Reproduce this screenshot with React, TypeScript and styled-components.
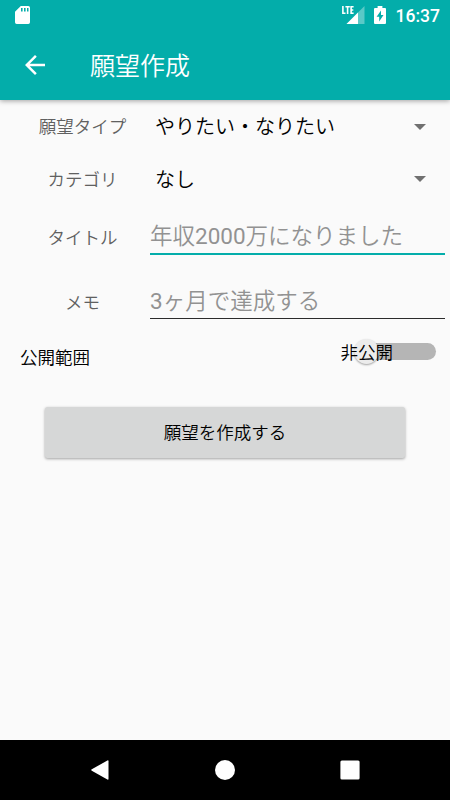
import React from 'react';
import styled, { createGlobalStyle } from 'styled-components';

const GlobalStyle = createGlobalStyle`
  *, *::before, *::after { box-sizing: border-box; }
  body { margin: 0; background: #fafafa; }
  svg { display: block; flex: none; }
  button { font: inherit; }
`;

const Screen = styled.div`
  width: 450px;
  height: 800px;
  display: flex;
  flex-direction: column;
  background: #fafafa;
  color: #000;
  font-family: Roboto, 'Noto Sans CJK JP', sans-serif;
  font-weight: 350;
  overflow: hidden;
`;

const Header = styled.header`
  flex: none;
  height: 100px;
  background: #03adaa;
  color: #fff;
  box-shadow: 0 1px 5px rgba(0, 0, 0, 0.36);
`;

const StatusBar = styled.div`
  height: 30px;
  display: flex;
  align-items: center;
  padding: 0 10px 0 15px;
`;

const Clock = styled.time`
  margin-left: 10px;
  font-size: 17.5px;
  font-weight: 500;
  line-height: 30px;
  padding-top: 2px;
`;

const Spacer = styled.div`
  flex: 1;
`;

const BatterySlot = styled.div`
  margin-left: 9px;
`;

const AppBar = styled.div`
  height: 70px;
  display: flex;
  align-items: center;
  padding-left: 25px;
  gap: 45px;
`;

const BackButton = styled.button`
  padding: 0;
  border: 0;
  background: none;
  color: inherit;
`;

const Title = styled.h1`
  margin: 0;
  padding-top: 4px;
  font-size: 25px;
  font-weight: 350;
  line-height: 30px;
`;

const Form = styled.main`
  flex: 1;
`;

const Row = styled.div<{ $height: number }>`
  display: flex;
  height: ${(p) => p.$height}px;
  padding: 0 5px 0 15px;
`;

const Label = styled.label<{ $top: number }>`
  width: 135px;
  padding-top: ${(p) => p.$top}px;
  font-size: 17.5px;
  line-height: 24px;
  text-align: center;
  color: #606060;
`;

const Select = styled.div<{ $caretLift?: number }>`
  flex: 1;
  display: flex;
  justify-content: space-between;
  align-items: center;
  height: 28px;
  margin-top: ${(p) => 13 + (p.$caretLift ?? 0)}px;
  padding: 0 19px 0 5px;
  font-size: 20px;
  line-height: 28px;

  svg {
    margin-bottom: ${(p) => 2 * (p.$caretLift ?? 0)}px;
  }
`;

const Field = styled.div<{ $focused?: boolean }>`
  flex: 1;
  min-width: 0;
  height: ${(p) => (p.$focused ? 50 : 49)}px;
  padding-top: 15px;
  border-bottom: ${(p) => (p.$focused ? '2px solid #03adaa' : '1px solid #2b2b2b')};
  font-size: 22.5px;
  line-height: 32px;
  color: #929292;
  white-space: nowrap;
`;

const Digits = styled.span`
  font-weight: 400;
`;

const VisibilityRow = styled.div`
  display: flex;
  justify-content: space-between;
  height: 68px;
  padding: 4px 14px 0 20px;
  font-size: 17.5px;
  line-height: 24px;
`;

const VisibilityLabel = styled.span`
  padding-top: 3px;
`;

const Switch = styled.div`
  position: relative;
  width: 95px;
  height: 24px;
`;

const Track = styled.div`
  position: absolute;
  left: 13px;
  right: 0;
  top: 0;
  height: 17px;
  border-radius: 9px;
  background: #b5b5b5;
`;

const Thumb = styled.div`
  position: absolute;
  left: 13px;
  top: -4px;
  width: 25px;
  height: 25px;
  border-radius: 50%;
  background: #ececec;
  box-shadow: 0 1px 2px rgba(0, 0, 0, 0.35);
`;

const SwitchText = styled.span`
  position: absolute;
  left: -0.5px;
  top: -2px;
`;

const SubmitButton = styled.button`
  display: block;
  width: 360px;
  height: 51px;
  margin: 0 auto;
  padding: 0 0 2px;
  border: 0;
  border-radius: 2.5px;
  background: #d6d7d7;
  color: #000;
  font-size: 17.5px;
  box-shadow: 0 1px 3px rgba(0, 0, 0, 0.36);
`;

const NavBar = styled.nav`
  flex: none;
  height: 60px;
  display: grid;
  grid-template-columns: repeat(3, 125px);
  justify-content: center;
  justify-items: center;
  align-items: center;
  background: #000;
`;

const Caret = () => (
  <svg width="12" height="6" viewBox="0 0 12 6">
    <path d="M0 0h12L6 6z" fill="#707070" />
  </svg>
);

export default function App() {
  return (
    <>
      <GlobalStyle />
      <Screen>
        <Header>
          <StatusBar>
            <svg width="15" height="18" viewBox="0 0 15 18">
              <path
                fill="#fff"
                fillRule="evenodd"
                d="M5.8 0H13.3Q15 0 15 1.7V16.3Q15 18 13.3 18H1.7Q0 18 0 16.3V5.8ZM6 2v3.6h1.6V2ZM9 2v3.6h1.6V2ZM12 2v3.6h1.5V2Z"
              />
            </svg>
            <Spacer />
            <svg width="23" height="18" viewBox="0 0 23 18">
              <path d="M22.5 0V18H4.5Z" fill="#fff" opacity=".35" />
              <path d="M16 6.5V18H4.5Z" fill="#fff" />
              <path d="M0 0h12v8.5H0z" fill="#03adaa" />
              <path d="M.9 0v7.2h2.6M3.4 .8h4.4M5.6 .8V8M11.6 .8H9.1v6.4h2.5M9 4h2.3" fill="none" stroke="#fff" strokeWidth="1.6" />
            </svg>
            <BatterySlot>
              <svg width="12" height="18" viewBox="0 0 12 18">
                <path
                  fill="#fff"
                  fillRule="evenodd"
                  d="M3.6 0h4.8v2H11q1 0 1 1v14q0 1-1 1H1q-1 0-1-1V3q0-1 1-1h2.6ZM7 4.5 2.6 10.8H5.2V15.5L9.5 9H7Z"
                />
              </svg>
            </BatterySlot>
            <Clock>16:37</Clock>
          </StatusBar>
          <AppBar>
            <BackButton aria-label="戻る">
              <svg width="20" height="20" viewBox="4 4 16 16">
                <path d="M20 11H7.83l5.59-5.59L12 4l-8 8 8 8 1.41-1.41L7.83 13H20v-2z" fill="#fff" />
              </svg>
            </BackButton>
            <Title>願望作成</Title>
          </AppBar>
        </Header>
        <Form>
          <Row $height={52}>
            <Label $top={15}>願望タイプ</Label>
            <Select>
              やりたい・なりたい
              <Caret />
            </Select>
          </Row>
          <Row $height={53}>
            <Label $top={16}>カテゴリ</Label>
            <Select $caretLift={1}>
              なし
              <Caret />
            </Select>
          </Row>
          <Row $height={65}>
            <Label $top={21}>タイトル</Label>
            <Field $focused>
              年収<Digits>2000</Digits>万になりました
            </Field>
          </Row>
          <Row $height={69}>
            <Label $top={21}>メモ</Label>
            <Field>
              <Digits>3</Digits>ヶ月で達成する
            </Field>
          </Row>
          <VisibilityRow>
            <VisibilityLabel>公開範囲</VisibilityLabel>
            <Switch>
              <Track />
              <Thumb />
              <SwitchText>非公開</SwitchText>
            </Switch>
          </VisibilityRow>
          <SubmitButton>願望を作成する</SubmitButton>
        </Form>
        <NavBar>
          <svg width="20" height="20" viewBox="0 0 20 20">
            <path d="M1.8 9.3 17.4.5q1.1-.5 1.1.7v17.6q0 1.2-1.1.7L1.8 10.7q-1.2-.7 0-1.4Z" fill="#fff" />
          </svg>
          <svg width="20" height="20" viewBox="0 0 20 20">
            <circle cx="10" cy="10" r="10" fill="#fff" />
          </svg>
          <svg width="20" height="20" viewBox="0 0 20 20">
            <rect x=".4" y=".4" width="19.2" height="19.2" rx="1.5" fill="#fff" />
          </svg>
        </NavBar>
      </Screen>
    </>
  );
}
